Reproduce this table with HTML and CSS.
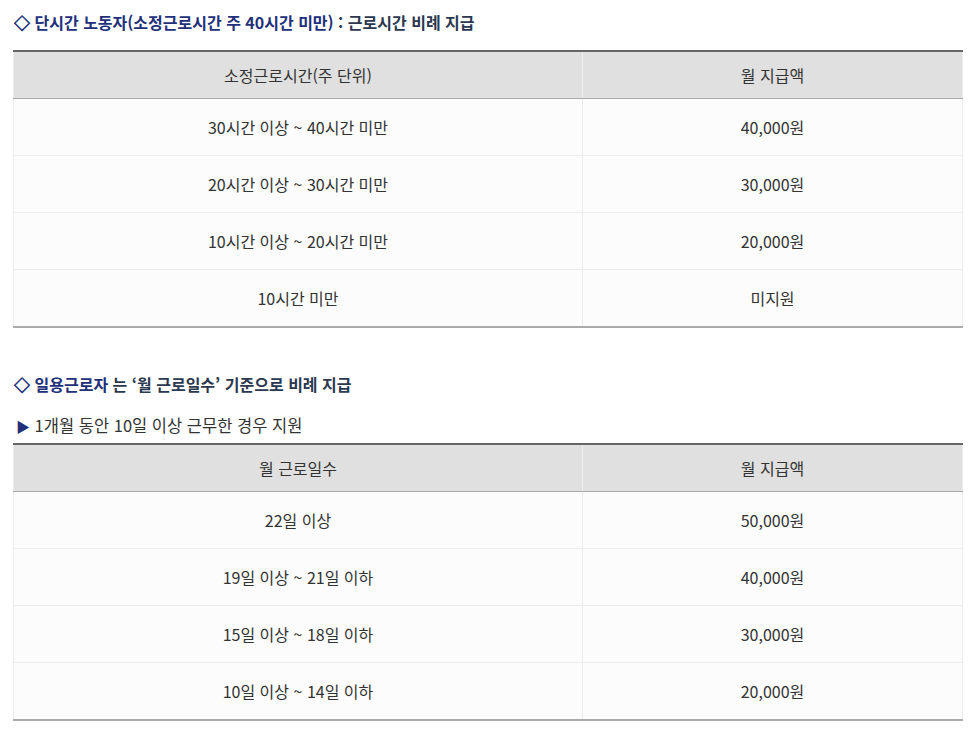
FILE: index.html
```html
<!DOCTYPE html>
<html lang="ko">
<head>
<meta charset="utf-8">
<link rel="stylesheet" href="styles.css">
</head>
<body>
<div class="page">
  <h3 class="title"><span class="dia">◇</span> <span class="hl">단시간 노동자(소정근로시간 주 40시간 미만)</span> : 근로시간 비례 지급</h3>
  <table class="tbl">
    <thead>
      <tr><th class="c1">소정근로시간(주 단위)</th><th>월 지급액</th></tr>
    </thead>
    <tbody>
      <tr><td class="c1">30시간 이상 ~ 40시간 미만</td><td>40,000원</td></tr>
      <tr><td class="c1">20시간 이상 ~ 30시간 미만</td><td>30,000원</td></tr>
      <tr><td class="c1">10시간 이상 ~ 20시간 미만</td><td>20,000원</td></tr>
      <tr><td class="c1">10시간 미만</td><td>미지원</td></tr>
    </tbody>
  </table>

  <h3 class="title title2"><span class="dia">◇</span> <span class="hl">일용근로자</span> 는 ‘월 근로일수’ 기준으로 비례 지급</h3>
  <p class="note"><span class="tri">▶</span> 1개월 동안 10일 이상 근무한 경우 지원</p>
  <table class="tbl">
    <thead>
      <tr><th class="c1">월 근로일수</th><th>월 지급액</th></tr>
    </thead>
    <tbody>
      <tr><td class="c1">22일 이상</td><td>50,000원</td></tr>
      <tr><td class="c1">19일 이상 ~ 21일 이하</td><td>40,000원</td></tr>
      <tr><td class="c1">15일 이상 ~ 18일 이하</td><td>30,000원</td></tr>
      <tr><td class="c1">10일 이상 ~ 14일 이하</td><td>20,000원</td></tr>
    </tbody>
  </table>
</div>
</body>
</html>
```

FILE: styles.css
```css
html, body {
  margin: 0;
  padding: 0;
  background: #fff;
}
body {
  font-family: "Noto Sans CJK KR", "Noto Sans", sans-serif;
  color: #333;
}
.page {
  padding: 10px 16px 0 13px;
}
.title {
  margin: 0;
  font-size: 16px;
  font-weight: 700;
  line-height: 24px;
  color: #2b3850;
}
.title .dia {
  color: #22307a;
  margin-left: 1px;
  -webkit-text-stroke: 0.6px #22307a;
}
.title .hl {
  color: #22307a;
}
.title2 {
  margin-top: 44px;
}
.note {
  margin: 17px 0 5px 3px;
  font-size: 16.5px;
  line-height: 24px;
  color: #333;
}
.note .tri {
  color: #22307a;
  font-size: 14px;
}
.tbl {
  width: 950px;
  table-layout: fixed;
  border-collapse: collapse;
  margin-top: 16px;
  border-top: 2px solid #666;
  border-bottom: 2px solid #aaa;
  border-left: 1px solid #ececec;
  border-right: 1px solid #ececec;
}
.note + .tbl {
  margin-top: 0;
}
.tbl th, .tbl td {
  text-align: center;
  font-size: 16px;
  font-weight: 400;
  color: #333;
  padding: 0;
}
.tbl .c1 {
  width: 568px;
}
.tbl th {
  background: #e0e0e0;
  height: 46px;
  border-bottom: 1px solid #aaa;
}
.tbl th + th {
  border-left: 1px solid #ececec;
}
.tbl td {
  background: #fcfcfc;
  height: 56px;
  border-top: 1px solid #ececec;
}
.tbl tbody tr:first-child td {
  border-top: none;
}
.tbl td + td {
  border-left: 1px solid #ececec;
}
```
